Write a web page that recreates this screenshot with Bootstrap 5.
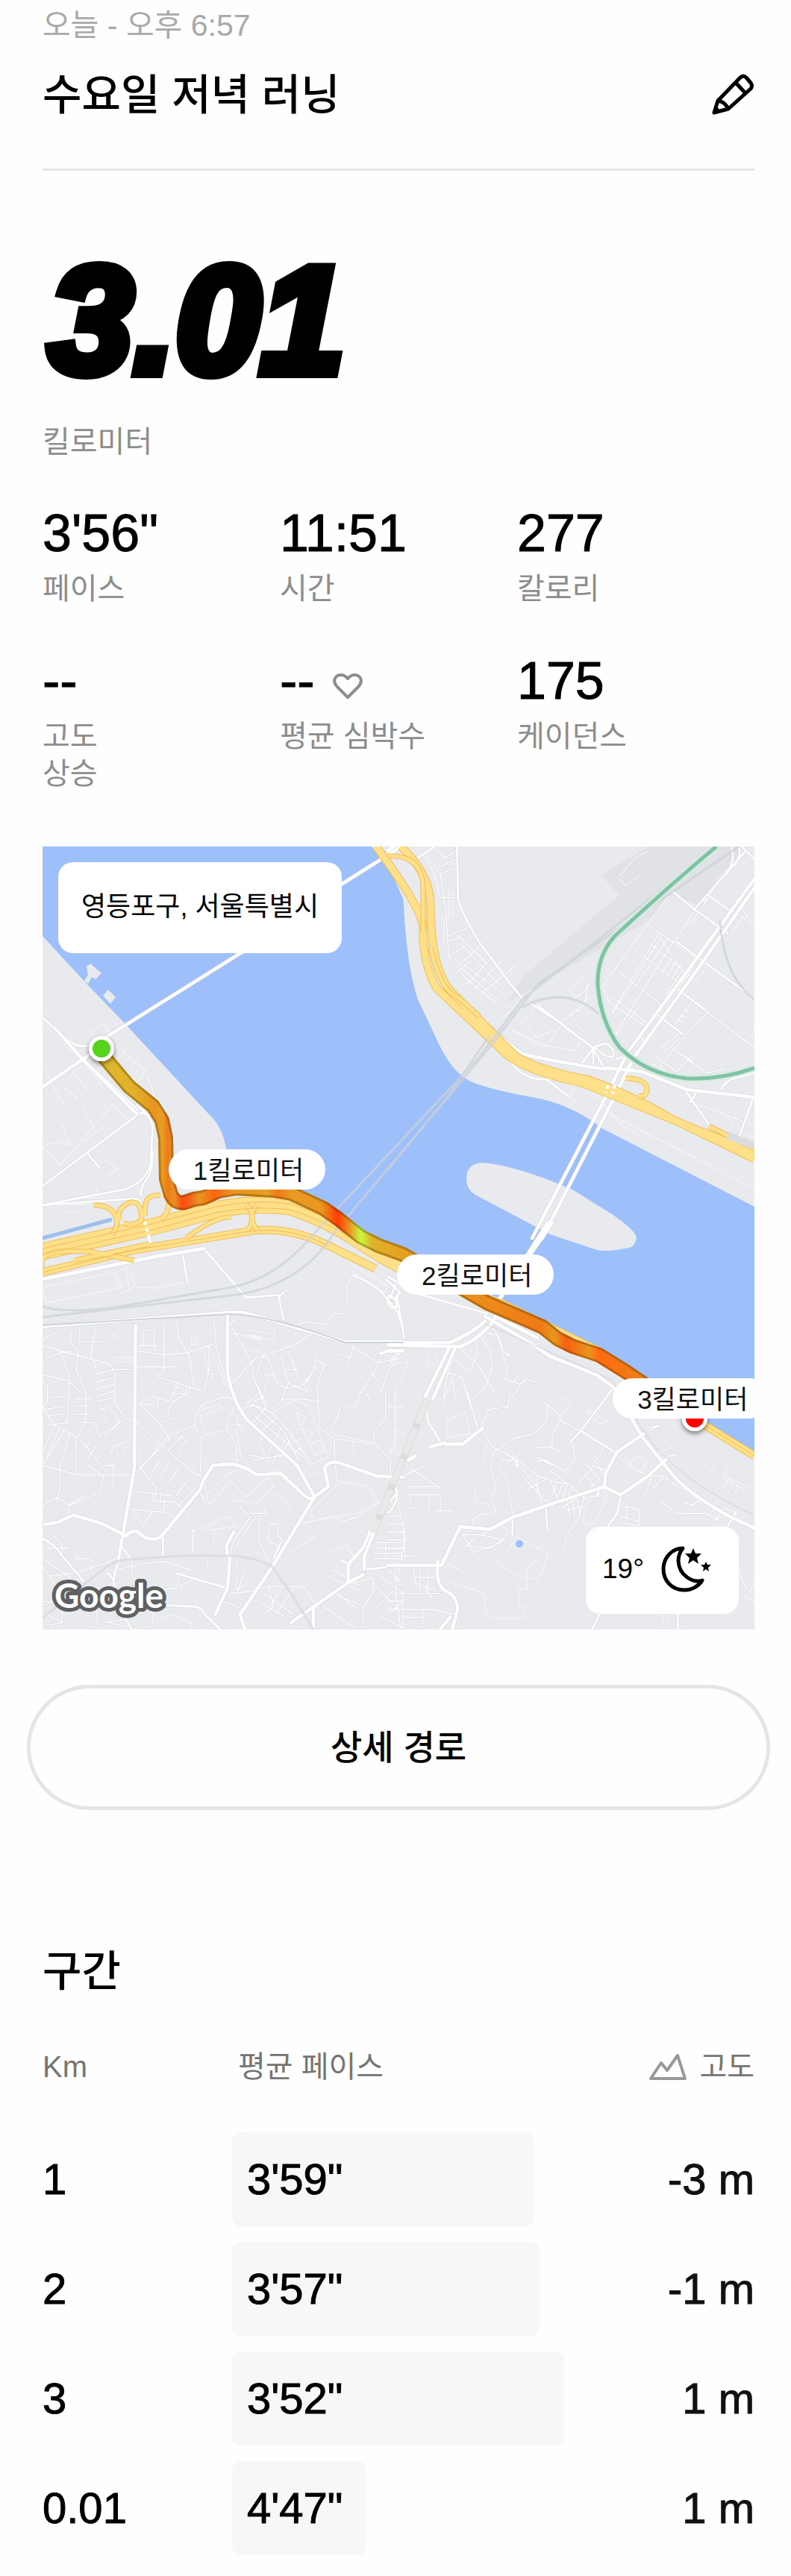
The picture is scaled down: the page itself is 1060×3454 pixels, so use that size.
<!DOCTYPE html>
<html lang="ko">
<head>
<meta charset="utf-8">
<meta name="viewport" content="width=device-width, initial-scale=1">
<title>수요일 저녁 러닝</title>
<link href="https://cdn.jsdelivr.net/npm/bootstrap@5.3.0/dist/css/bootstrap.min.css" rel="stylesheet">
<script src="https://cdn.jsdelivr.net/npm/bootstrap@5.3.0/dist/js/bootstrap.bundle.min.js"></script>
<style>
  body { font-family: "Liberation Sans", "Noto Sans CJK KR", sans-serif; color: #000; background: #fefefe; font-size: 40px; line-height: 50px; }
  .run-page { padding: 9px 49px 6px 57px; }
  .run-date { color: #a9a9a9; font-size: 41px; }
  .run-head { margin-top: 28px; padding-bottom: 59px; border-bottom: 3px solid #e5e5e5; }
  .run-title { font-size: 57px; line-height: 80px; font-weight: 500; }
  .edit-btn svg { width: 58px; height: 56px; }
  .hero-num { margin-top: 100px; padding-left: 8px; font: italic 700 204px/200px "Liberation Sans", sans-serif; -webkit-text-stroke: 14px #000; }
  .caption-text { color: #8d8d8d; }
  .hero-label { margin-top: 38px; }
  .stats { margin-top: 63px; row-gap: 64px; }
  .stat-num { font-size: 70px; line-height: 70px; margin-bottom: 14px; -webkit-text-stroke: 1px #000; }
  .stat-num svg { width: 40px; height: 38px; margin-top: 14px; }
  .map-box { margin-top: 73px; aspect-ratio: 954 / 1050; overflow: hidden; background: #e8eaed; }
  .map-box > svg { width: 100%; height: 100%; display: block; }
  .map-box .place-box { left: 2.2%; top: 2%; padding: 35px 31px 37px; border-radius: 20px; font-size: 36px; }
  .km-pill { position: absolute; background: #fff; border-radius: 27px; width: 210px; height: 54px; padding-left: 33px; font-size: 35px; line-height: 58px; color: #111; white-space: nowrap; }
  .km-1 { left: 17.7%; top: 38.7%; }
  .km-2 { left: 49.8%; top: 52.1%; }
  .km-3 { left: 80.1%; top: 67.9%; }
  .weather-box { right: 21px; bottom: 21px; width: 205px; height: 117px; border-radius: 20px; padding: 0 36px 4px 22px; font-size: 37px; }
  .weather-box svg { width: 68px; height: 62px; }
  .route-btn { margin: 74px -21px 0; height: 168px; border: 5px solid #e5e5e5; font-size: 46px; font-weight: 500; color: #000; }
  .splits-title { margin-top: 176px; font-size: 57px; line-height: 80px; font-weight: 500; }
  .splits { margin-top: 63px; table-layout: fixed; width: 100%; }
  .splits th { font-weight: 400; }
  .splits thead th { color: #757575; padding: 0 0 63px; }
  .splits thead th:nth-child(2) { padding-left: 8px; }
  .splits thead svg { width: 52px; height: 38px; }
  .splits tbody { font-size: 58px; -webkit-text-stroke: 1px; }
  .splits tbody th, .splits tbody td { padding: 0 0 21px; vertical-align: middle; }
  .splits tbody td:last-child { color: #111; }
  .c-km { width: 254px; } .c-alt { width: 200px; }
  .pace-bar { height: 126px; background: #f7f7f7; border-radius: 12px; padding-left: 20px; white-space: nowrap; }
</style>
</head>
<body>
<main class="run-page">
  <div class="run-date">오늘 - 오후 6:57</div>
  <header class="run-head d-flex justify-content-between align-items-center">
    <h1 class="run-title m-0">수요일 저녁 러닝</h1>
    <button class="edit-btn btn p-0 border-0 d-flex" aria-label="제목 수정">
      <svg viewBox="0 0 58 56" fill="none" stroke="#000" stroke-width="5" stroke-linejoin="round"><path d="M4 52 L9 36 L39 5 Q43 1 47 5 L53 12 Q56 16 53 20 L23 47 Z M9 36 Q18 37 23 47 M33 12 L46 26"/><path d="M3 53l3-9 6 6z" fill="#000" stroke-width="2"/></svg>
    </button>
  </header>

  <div class="hero-num">3.01</div>
  <div class="hero-label caption-text">킬로미터</div>

  <section class="stats row gx-0">
    <div class="col-4"><div class="stat-num">3'56"</div><div class="caption-text">페이스</div></div>
    <div class="col-4"><div class="stat-num">11:51</div><div class="caption-text">시간</div></div>
    <div class="col-4"><div class="stat-num">277</div><div class="caption-text">칼로리</div></div>
    <div class="col-4"><div class="stat-num">--</div><div class="caption-text">고도<br>상승</div></div>
    <div class="col-4"><div class="stat-num d-flex align-items-center gap-4">--<svg viewBox="0 0 40 36" fill="none" stroke="#8d8d8d" stroke-width="4" stroke-linejoin="round"><path d="M20 33 L6 19 C-2 10 4 3 11 3 Q16 3 20 8 Q24 3 29 3 C36 3 42 10 34 19 Z"/></svg></div><div class="caption-text">평균 심박수</div></div>
    <div class="col-4"><div class="stat-num">175</div><div class="caption-text">케이던스</div></div>
  </section>

  <section class="map-box position-relative" aria-label="러닝 경로 지도">
    <svg viewBox="57 1135 954 1050" preserveAspectRatio="xMidYMid slice" fill="none" stroke-linejoin="round" stroke-linecap="round">
      <defs>
        <linearGradient id="pace" gradientUnits="userSpaceOnUse" x1="135" y1="0" x2="935" y2="0">
          <stop offset="0" stop-color="#dfb632"/><stop offset=".05" stop-color="#dfb42a"/><stop offset=".09" stop-color="#e8951f"/><stop offset=".103" stop-color="#e5a024"/><stop offset=".112" stop-color="#f07a1a"/><stop offset=".124" stop-color="#e89020"/><stop offset=".136" stop-color="#fb4c10"/><stop offset=".15" stop-color="#f5641a"/><stop offset=".165" stop-color="#e8951f"/><stop offset=".19" stop-color="#fb6412"/><stop offset=".22" stop-color="#ea951f"/><stop offset=".28" stop-color="#e69f22"/><stop offset=".295" stop-color="#f07a1a"/><stop offset=".32" stop-color="#e89a20"/><stop offset=".37" stop-color="#ea951f"/><stop offset=".397" stop-color="#ff3b00"/><stop offset=".415" stop-color="#ec8a1f"/><stop offset=".436" stop-color="#c6fb3c"/><stop offset=".455" stop-color="#dfb22a"/><stop offset=".51" stop-color="#e69f22"/><stop offset=".65" stop-color="#ec8a1a"/><stop offset=".735" stop-color="#f07a16"/><stop offset=".76" stop-color="#e8951f"/><stop offset=".78" stop-color="#f86010"/><stop offset=".818" stop-color="#e8951f"/><stop offset=".834" stop-color="#ff6a10"/><stop offset=".9" stop-color="#ee7e18"/><stop offset="1" stop-color="#e8701a"/>
        </linearGradient>
        <filter id="pinShade" x="-50%" y="-50%" width="200%" height="200%"><feDropShadow dx="0" dy="3" stdDeviation="3" flood-opacity=".5"/></filter>
        <!-- street layers, one path per map quarter -->
        <g id="lanes">
          <path transform="translate(40 1120) scale(.3333 .3444)" d="M245 765l50-33 35 50M245 765l15 45M345 820l120 95-30 45-90-80M360 810l-20 30M385 830l-24 35M410 850l-30 40M430 872l-30 42M450 890l-28 40M170 915l65 80M180 915l45-20 65 75M51 1210l70 75 215-240M51 1210l60-15 60 10M115 960l75 65M60 920l80 135M130 1125l30 80M215 1065l50 90M220 1190l90-65M140 1470l70-8M260 1350l20 60M330 1045l70 70M300 1260l55 40-50 30"/>
          <path transform="translate(520 1120) scale(.3333 .3444)" d="M140 75q60 70 65 165M245 220v100M260 220v100M215 320h10v110M500 760l100 55 150 25M530 740l60-60M560 750l40 40 60-30M730 600l60-60M720 600l40 30M930 160l60-70 60-30M930 170l25 25 60-40M1100 830l70-60M1095 820l30 15 50-50M720 970l90 10 60 70 70 80 60 30M880 1080L1473 1375M1320 1060l60 50M1430 1160l43 20M1420 280l53 80M1200 350l40-20M750 980l-25 40 45 20"/>
          <path transform="translate(40 1640) scale(.3333 .3571)" d="M51 240l290-55 35 55-310 60-15-60M345 200l10 40M385 160l15 90M400 165l25 70-60 30M430 240l70 5 120-22M1290 155l150 80-10 25-140-80M340 505h80v15h-80zM320 415l60 20M650 430h20v25h-20zM980 710l80-45 60 20 80 190-60 30-110-130zM1070 710l40 20-20 30zM1090 770l50 20-20 30zM1125 830l40-15 20 40-40 15zM680 705l80-25 10 20-60 20M680 705l25 90 105-20M690 1040l110-100 80-30M720 1060l90-90 60 60 90-80 20 40-70 60-100-10M700 1140l100-40 30 40-130 15zM1130 1080l120-110 110 20 40 60-90 40-170 30zM1210 1230l60-20 30 40M1050 1230l110-60M1470 630v220M1440 690h60M510 1490l60-20 80 30v25M1240 810l140 20M1300 820v40M740 1160v40M950 1010l60 20 50 60"/>
          <path transform="translate(520 1640) scale(.3333 .3571)" d="M240 740l70-30 20 80-90 15zM160 500h35v30h-35zM780 1125l30-110 40-30 30 30-20 60-40 60zM800 700l80 45-30 10-50-50M700 650l35 25-50 60M950 880l60 60 30-40-40-30-40 50M1290 940l40-50M1370 900l-20 50 100 40M1350 960l100 50M1370 960l-20 40M1390 970l-20 40M1410 975l-15 40M480 1230l40-50 125 60-40 100-90-15-90-60M240 1280l60 30M245 1345l140 45 10 80 40 15h110v-50h-20v-60h35v-70M30 620v200l-20 50M0 770l70 20M0 850l60 20M600 1260l-60 60M10 530l70-10-30 90M400 830l-20 60"/>
        </g>
        <g id="minor">
          <path transform="translate(40 1120) scale(.3333 .3444)" d="M51 730l160 150M230 1240l50 60M51 1440l120-25 130-5M160 1440l90-5M470 930l35 95"/>
          <path transform="translate(520 1120) scale(.3333 .3444)" d="M155 75l55 75 22 140 12 180 70 90 120 90M190 50l40 40M225 90l45-28M200 125l70-30M210 150l60-22M205 242h75M232 292l58-8M240 390l85-32M245 470l65-40M245 410l40-10M280 390l120 110M300 430l165 170M265 540l70-50M290 500l80-70M320 580l100-110M345 600l110-110M370 620l140-110M300 500l180 130M260 470l50 60 130 110M480 560l20-30M465 710l70-70M690 730l100-70 15-80M735 700l55 70M640 820l55-80M500 760l140 60 110 20 25-35M745 640l40-30 30-40M770 655l60-30M760 680l15 10M1130 235L860 590l30 60 140 90M1055 355l190 130M985 440l180 130M925 530l175 130M900 630l140 100M915 780l120-140M905 690l190-290M950 720l200-310M1095 400l120 170M1065 430l120 95-70 100M1090 380L900 690M1125 400l-130 190M1150 410L910 780M1165 600l65-90M1100 540l40-60M1120 550l40-60M1140 560l40-60M1235 290L1150 420M1330 180l-110 160M1380 380l50-65M1400 300l73 55M1290 240l-65 50M1205 545l35 20 40-50M1150 740l75-95M1165 720l20 10M1180 700l20 10M1195 680l20 10M1145 830l135 95 75-15M1085 910l110-130 100-100M1060 850l100 70 60-60M1065 890l60 30M1165 845l60 35M1450 790l23-30M1250 1050l223 80M1205 1040l30-35M1270 680l203 145M1380 1120l20-40"/>
          <path transform="translate(40 1640) scale(.3333 .3571)" d="M51 440l50-30M51 460l270 70 20 30v110l40 60 60 20M165 400l0 50 30 30-10 70 40 80v110l-30 60M200 395v50h95M265 395l-20 100 20 50M51 520l60-30 60-10M120 480l40 90-10 180-80 10M51 570l100 20 60 50M51 600l20 10v60l-20 20 50 70 90 45M70 655l80-5M60 700l85-15M75 725l70-10M180 660h70M180 685h70M180 718h70M190 748h70l20 55 40-30M260 570l75-20M260 600l75-20M265 625l75-20M270 650l70-20M275 670l70-20M280 700l40-8 40 50-60 60M290 720l30 40M330 780l40-40M100 760l-45 90M120 765l-50 110M140 775l-85 130M160 790l-40 130v80l-15 50M185 810l2 130M200 810l110 125M220 850l20-30M235 880l35-45M51 910l140 35h225M305 910h35M335 905v90M51 1060l60-30 50 30 120-50 15-60-60-40M160 1095v-40l70-35M325 870l10-30 50-20 35 15M350 850v20M380 835v25M335 550h85M430 540h160M430 480l120 15 90-10 100-30M455 400v60M465 400h35v80M435 460h80M540 375v180l-30 20 180 55M590 375l10 60 40 60 20 120M640 490l10 60M740 360l10 110 45 140 20 0M720 460v90l-20 80M700 480l20 90M715 550l20 0-5 40M755 530l30 80M600 600l-40 70-70-20-50 30 80 70 40 60-50 40-70 80M440 680l60 0M510 700l10-40M560 720l-5-20 20-30 60-30 10-20M530 750l50-20M570 640l60 0v-30M580 610l20 10M430 750l60 50 60 50 110 90 30 10M500 850l60-50 100-40 30 50-5 140M560 850l50-50 20 20-30 30 10 15M440 920l80-70M490 940l40-60M520 960l40-60M550 980l50-60M590 1020l50-60M600 1060l70-70M440 915l70 80-10 50 80 0 60 50M415 1005l160 20M495 1010v40M525 1010v40M400 1075l140 10 60 30M420 1080l30 50M490 1085l-40 60M540 1040v40M665 760q-10-80 80-95 50-25 85 10l-30 60-10 40 40 50v90M830 730l20 60M800 760l50-5 10 30M830 770l20 115M815 600l90-90 150-50 90-50M800 370l90 150 10 60 50 120M800 410l130 30M830 360l-30 20M880 400l85 15M870 420l60 15M985 390l-5 50-90-20M1070 410l-10 20M870 480h50l40 30 30 90 40 20 65-10 50-60v-40l40 20-30 80 10 160 60 40v60l10 100M940 500l-30 70M1040 480l40 100M960 570l-20 80-40 20M910 600l45 90M920 640l-50 40M980 570h-40M1010 500l30 100-30 70M1040 600l70 30M1030 550l50 0M1100 600l20 40M1150 540l-40 60M1010 660l90 0 60 10M970 700l40-30M890 680l80 30 80 80 80 120M850 700l50-20 120 100 60 110M900 720l200 160M890 760l60-70M920 790l70-60M920 830l20-50M960 860l50-90M970 910l60-100M1000 890l60-100M1030 830l60-20M1060 860l40-20M1130 910l80-40M1130 950l30-20M900 890l120-20M920 930h100M930 840l30 60M880 870l50 10M1240 490l45 15M1280 530l20-70M1300 465l100 60 100-20M1380 560l-50 80M1410 510l-30 60 20 20M1500 470l-60 90-30 80M1330 630l-20 60-60 0-40 100M1430 620v110l-50 60 10 40 60 60v80M1210 790l170 35M1350 630l20 40M1270 320l10-50-10-30 30-50M1060 380l60-8 70 8 30-40h40M900 330l30-35M1010 260l40-10M880 1100l-40-40M890 1090h60l-10-20M890 1100l-70 90-30 100M920 1100v90l50 100M910 1100l-80 110M960 1130h35l0 40 35 40M965 1200l40 10M960 1130v70M655 1150v90M655 1160l10-10M1090 1130l130-30 40 20 60-20 60-40 70-20M1290 1100l30 10M410 1260v60M355 1300l90-20 100-10 110 35M51 1330l150-20 150-50M51 1260l110 70M51 1290l60 80M70 1220h90M90 1170l40 40v50M190 1230l-5 30h60M70 1470l60 30M51 1420l200 20M240 1280l20 50M715 1255v30M835 1250l-5 45M660 1340l-60 20M600 1320l-10 50-50 5M800 1390q80 0 150-25h150l70 90M865 1300l-30 90M830 1320l0 60 60-40M780 1420l80 30M920 1420l110 60M940 1390l120 80M960 1360l20 80-50 40M1010 1370l-40 70M1060 1370l-70 100M1180 1320l150 60M1215 1300l110 60M1220 1380l100 70M1240 1400l80 30M1270 1360l110-30v60l-40 50v80M1180 1440l130 80M1400 1320l100 70M1440 1300l60 60M1380 1350l100 100M1380 1460l120 60M1390 1200h110M1390 1220h110M1385 1240h115M1380 1260h120M1430 1200v60M1400 1440l60-60M1440 1470l60-50M270 1450v60M300 1500l80-10M500 1460l-10 60M130 1440v60l-50 10M320 1500l110 25M700 960l20 100M680 1000l30 60"/>
          <path transform="translate(520 1640) scale(.3333 .3571)" d="M420 395q40 40 40 100 30 50 10 90l60 20 30-20 40 15M370 420l40 60 10 60-30 80-50 40M380 410l60 10 20 60 30 20M350 430l10 60-30 70-60-45M290 470l70 60 80 120M270 500l-30 60-20 120M240 560l60 20 30 90 30 100M265 570l-40 90M300 600l60 160M260 590l10 70M470 500l20-10M500 600l30-30M495 660l50-70M480 700l10-60M375 760l30-60 80-10M380 780l40 60 80 40 100 110 20 70M440 850q-30 10-25 80l20 60-20 40 20 60M440 850l60-40 90-20 50-50 0-60M640 680l60 50-40 60 0 50-80 5M650 840l50 20M690 740l80 40M640 680l-10 0M740 810l10 80-40 40-80-40-40 5M600 880l60 30M740 810l30-30M455 890l70 0 80 60 60 20 60 10M455 890q-20 30 20 60l15 80 15 80M500 870l20 50M480 900l60-40M520 870l0 50M550 960l60 60 40 40M560 1000l80-40M600 950v60M650 930l90 60 60 50M655 970l30 70M680 970l-20 50M700 980l-20 50M720 985l-20 50M740 990l-20 50M760 980l80-80 40 70M790 900l60 60-40 40M820 910l60 20M790 940l40 50M830 900l40-60 50 30 60 50 70 30M700 1070l60-40 10 60M720 1040l10 60M740 1035l10 70M710 1080l65-15M790 1020l-20 80-50 70-20 80M810 1030l40-10v-30M930 1060l80 15v60l-80-10M930 1100l80 20M960 1065v60M1050 950q60-10 100 30l60 30 60 50M1060 950l-30 80M1060 1000l50-45M1090 1040l70 50 120 0 60 30M1120 1090l15-15M1190 1050l40 10M1220 1060l50-30M1290 1100l40-60M1310 1120l40-50 60 20M1320 1100l30 10M1080 870l80-40M1090 880l70-10M1050 780l40-20M1040 770l50-10M40 960l110-50M40 975l60-50 110 70M75 990h130M80 1020l130 0v60M165 1025v70M90 1030v40h30M190 1080h70M0 1100h50M0 1130h60M0 1160h65M0 1190h65M0 1220h70M0 1250h110M30 1000l40 180-40 200 20 140M60 1120l10 150M30 1270v80M300 1170h70l100 20-60 30-110-10M310 1220l40-40M330 1240l100-30 60-50M380 1170l60-40 60 30M350 1000l0 40 60 20M340 1130q0-40 80-40M0 1420h60M30 1390h180M0 1450h180M60 1480h80M100 1290l10 60 80 30M160 1310v70M110 1330h80M130 1300v80M140 1450v70M60 1380v140M180 1450l80 20M150 1370l30 40M300 1170l40 60M1410 1310l30 60M1450 1390l23-40M1430 1400l43 20M1105 1470v30M1125 1470v30M10 510l60-40M0 540l50-70"/>
        </g>
        <g id="mid">
          <path transform="translate(40 1120) scale(.3333 .3444)" d="M51 710q50 45 100 85 30 30 80 25M51 1365L445 1080M230 1235l50 60M445 1080l50 10M51 1440l320-60q90-20 115-100l8-150q-10-40-65-80M51 1440l360-25q30-5 40 30M445 1400q0-35 30-70 20-30 18-100M215 870l220 200"/>
          <path transform="translate(520 1120) scale(.3333 .3444)" d="M277 43l5 210q30 80 90 170l120 155 50 60M110 95l90-60M565 650l120 75M600 660l220 165M690 730l130 95M825 825l50-15q40 20 30 50-30 10-75-35M825 830l-45 55M825 830v60M825 830l40 70M1145 220l90 70 130 90M1290 235l80 55M1165 600l110 80M1085 700l100 75M1160 415l85 60 228 160M1380 43q20 50-20 110M1410 43q20 50-50 100M1440 60L1230 290M1420 43l53 50M635 950l90 65M500 890q50 60 130 60h120M1200 1000l90 125 115 60M1215 1040l30-50M1473 1010l-65 175M1340 990q20-40 60-45l73-20M920 870l60-20M1020 790l10 20M960 900l40 15"/>
          <path transform="translate(40 1640) scale(.3333 .3571)" d="M480 80l130-8 290-50M615 120l18 100M1000 275l20 85M700 95l170 185 130-10M1020 260l-20 20M1300 195q80 30 120 70l60 70 20 60M1430 210l60 50-20 20M1460 280q-30-10-20 20t40 10M420 380q10 20 0 50M51 1185q50 20 75 60l90 100M365 1210l40 50M310 1315q30 10 35 70M360 1270q-40 60-10 160l60 95M590 1315l200 55M1355 1300l145-15M1250 1265l40 20M1010 1200l-30 60M1470 1020l-80 90M545 1435l120 5q20 0 40 30l60 55M535 1180v70"/>
          <path transform="translate(520 1640) scale(.3333 .3571)" d="M905 620L775 780l-40 40M775 780l145 85M0 200l100 60 300 80M30 230l-20 50M35 270l30 160M0 270q50 20 30 50M155 700q0 50 30 80l30 50M500 1110v60M635 1070l5 80M935 1020q-10 80-30 90l-30 40M1400 1080l-40 70M1165 1470v55M850 1470l-30 55M850 1000l-10 25M0 1090q60-60 20-120"/>
        </g>
        <g id="major">
          <path transform="translate(40 1120) scale(.3333 .3444)" d="M1500 40L1257 188 845 460 300 790M51 980L215 870l75-50M100 750l110 120 220 215"/>
          <path transform="translate(520 1120) scale(.3333 .3444)" d="M0 60l30-20M1473 170L1240 480 960 850l-70 140-310 578M1473 205L1260 500 985 870l-70 140-295 558M370 710q80 80 170 140 60 20 330 60M870 905l150 15 180 70 273 30"/>
          <path transform="translate(40 1640) scale(.3333 .3571)" d="M51 210l460-85 190-30M470 35l15 40M51 388l740-52q60-5 110 10l370 100h229M425 385L420 920 372 1180l-15 80M795 350v210q20 110 80 180l200 170 65 110q0 30-40 0l-90-80-100 5q-50-40-120-40l-55 5-40 60-10 30-160 180q-50 20-90-20-25-10-50 15-90-50-140-60l-70-18-60 25-55 10M1140 1030l60-40-15-70q15-30 60-20l150 50 105 5M1140 1035L975 1290l-130 180 20 55M805 1250l-10 120-50 100M795 1250l-5-40 30-50M1280 1350v-70l60-60 50-110M1050 1500l230-150 60-30M1345 1300v-50l60-140M1140 1440v80M1500 480h-60l-30 10"/>
          <path transform="translate(520 1640) scale(.3333 .3571)" d="M660 0L450 280M640 0L440 300M0 458l290 6q60-20 120-80l30-40M0 448l250 0q80-30 140-80M245 470L150 650M270 470L180 660M390 350l200 110 60 40 190 70 70 50 110 180 120 140q60 70 230 160l103 45M430 350l170 80M920 860l-45 80-5 50 65 30 110-70 75-65M870 990l-200 60-170 55-90 45-120-10-75 145H0M300 830l80-60M230 830l70 0M170 840l60-15M80 890l30-15M1030 790l-110 70M200 1270q-10 90 30 110 50 20 50 70l-20 70M250 1480l-40 45"/>
        </g>
        <!-- motorway ribbons, ramps and the run itself -->
        <path id="leftBank" d="M57 1678L200 1646 290 1622Q340 1612 390 1618 440 1635 480 1662T560 1707"/>
        <path id="ribbons" d="M57 1706L180 1676 340 1650Q390 1645 440 1670L503 1701M540 1700L677 1750 803 1812 935 1905 1011 1952M537 1135Q575 1170 577 1210 577 1300 605 1330L690 1415Q720 1435 790 1448 850 1470 900 1500L1011 1554M504 1135Q560 1210 567 1240 565 1290 585 1325L680 1415Q710 1438 780 1452L1011 1546"/>
        <path id="ramps" d="M520 1148Q565 1145 567 1190V1250M577 1270Q590 1330 615 1338L643 1363M838 1446Q868 1446 867 1462 865 1472 855 1470M950 1510L1011 1540M125 1616Q155 1615 157 1640 155 1650 150 1655M160 1636Q155 1620 175 1612 190 1610 190 1635 180 1645 165 1640M195 1630Q190 1600 215 1603M215 1635Q230 1625 225 1600M57 1700Q50 1682 80 1678L120 1678 180 1690M330 1615Q345 1630 332 1650M345 1615Q330 1630 345 1650M250 1660Q290 1630 310 1632M100 1690L200 1668"/>
        <path id="run" d="M135 1412L173 1457 205 1483 217 1502 222 1526 223 1581 229 1602Q236 1615 248 1612L260 1608 273 1606 293 1597 317 1593 367 1596 390 1600 433 1620 453 1634 483 1658 507 1670 540 1682 653 1747 727 1779 747 1795 767 1805 803 1817 840 1840 931 1902"/>
      </defs>

      <rect x="57" y="1135" width="954" height="1050" fill="#e8eaed"/>
      <path fill="#e0e2e6" d="M805 1173L870 1135H1000L960 1180 940 1215 900 1200 868 1235 800 1275 680 1345 700 1310 830 1200Z"/>
      <path fill="#9dc0fb" d="M57 1135H498L540 1189Q543 1290 560 1340L583 1389Q605 1440 633 1451T713 1471 807 1513L1011 1618V1948L940 1915 870 1850 803 1808 737 1774 677 1744 600 1712 540 1680 480 1648 433 1612 330 1595 303 1540Q298 1510 280 1494L168 1373 117 1320 57 1255Z"/>
      <path fill="#e8eaed" d="M625 1580Q625 1560 647 1559 690 1562 767 1595L820 1628Q852 1650 853 1660 850 1673 843 1673 810 1680 797 1675L737 1655 637 1602Q625 1595 625 1580ZM520 1158l15-8 20 30 10 30-23 0ZM116 1296l5-4 15 13-8 8-5-3-5 9-5-4 5-8zM138 1335l7-8 10 10-7 9z"/>
      <path stroke="#9dbfec" stroke-width="5" stroke-linecap="butt" d="M57 1660L150 1635"/>
      <ellipse cx="696" cy="2070" rx="5" ry="5" fill="#9dc0fb"/>

      <use href="#lanes" stroke="#f6f7f8" stroke-width="3"/>
      <use href="#minor" stroke="#d9dbdf" stroke-width="7"/>
      <use href="#minor" stroke="#fff" stroke-width="4"/>
      <use href="#mid" stroke="#d4d6da" stroke-width="11"/>
      <use href="#mid" stroke="#fff" stroke-width="8"/>
      <use href="#major" stroke="#d0d3d8" stroke-width="16"/>
      <use href="#major" stroke="#fff" stroke-width="13"/>
      <g stroke="#cfd2d6" stroke-width="2">
        <path d="M57 1777L305 1762Q350 1760 463 1800H540"/>
        <path d="M650 1775L735 1812 820 1850 860 1915Q900 1980 1011 2032" stroke-width="1"/>
        <path d="M57 2169L120 2119Q145 2096 163 2092L240 2086H313Q350 2090 365 2101L390 2136 420 2185" stroke="#dcdee1" stroke-width="3"/>
      </g>
      <g stroke-linecap="butt"><path stroke="#dcdcdc" stroke-width="10" d="M573 1875L500 2055"/><path stroke="#e9e9e9" stroke-width="8" stroke-dasharray="36 8" d="M573 1875L500 2055"/></g>

      <!-- riverside expressways -->
      <g stroke-linecap="butt">
        <use href="#leftBank" stroke="#efbd55" stroke-width="23"/>
        <use href="#leftBank" stroke="#ffe08a" stroke-width="21"/>
        <use href="#ribbons" stroke="#efbd55" stroke-width="11"/>
        <use href="#ribbons" stroke="#ffe08a" stroke-width="9"/>
        <use href="#ramps" stroke="#efbd55" stroke-width="7"/>
        <use href="#ramps" stroke="#ffe08a" stroke-width="5"/>
        <path stroke="#efbd55" stroke-width="1" d="M57 1674L200 1642 290 1618Q340 1608 390 1614 440 1631 480 1658M57 1682L200 1650 290 1626Q340 1616 390 1622 440 1639 480 1666M57 1706L180 1676 340 1650Q390 1645 440 1670M935 1905L1011 1952"/>
      </g>

      <!-- rail lines -->
      <g stroke="#cdd1d6" stroke-opacity=".75" stroke-width="3">
        <path d="M57 1752Q90 1762 160 1752L310 1726Q370 1715 420 1655L640 1420 700 1340 960 1135M57 1766L300 1738Q400 1730 450 1650L660 1400 720 1320 990 1135M700 1350Q760 1320 803 1360M965 1235Q970 1310 1011 1340M520 1568L600 1470 655 1390"/>
      </g>
      <path stroke="#fff" stroke-width="4" stroke-dasharray="5 4" stroke-linecap="butt" d="M194 1638L200 1660M815 1455L812 1465M824 1455L821 1467"/>
      <path stroke="#dcdcdc" stroke-width="10" stroke-linecap="butt" d="M975 1522L1011 1537"/>

      <!-- green metro line -->
      <g stroke-linecap="butt"><path stroke="#d8ece3" stroke-width="10" d="M960 1135Q900 1185 825 1254 800 1280 801 1320 805 1370 830 1404 865 1440 920 1446 965 1448 1011 1432"/>
      <path stroke="#80c2a4" stroke-width="5" d="M960 1135Q900 1185 825 1254 800 1280 801 1320 805 1370 830 1404 865 1440 920 1446 965 1448 1011 1432"/></g>

      <!-- the run, coloured by pace -->
      <use href="#run" stroke="url(#pace)" stroke-width="20"/>
      <use href="#run" stroke="#5a3c00" stroke-opacity=".35" stroke-width="20"/>
      <use href="#run" stroke="url(#pace)" stroke-width="14"/>
      <g filter="url(#pinShade)"><circle cx="136" cy="1406" r="17" fill="#fff"/><circle cx="931" cy="1902" r="17" fill="#fff"/></g>
      <circle cx="136" cy="1406" r="12" fill="#55d41b"/><circle cx="931" cy="1902" r="12" fill="#f00"/>
      <text x="73" y="2156" font-family="Lato, sans-serif" font-weight="700" font-size="46" fill="#fff" stroke="#5f6062" stroke-width="10" paint-order="stroke">Google</text>
    </svg>
    <div class="place-box position-absolute bg-white">영등포구, 서울특별시</div>
    <div class="km-pill km-1">1킬로미터</div>
    <div class="km-pill km-2">2킬로미터</div>
    <div class="km-pill km-3">3킬로미터</div>
    <div class="weather-box position-absolute bg-white d-flex align-items-center justify-content-between">19°
      <svg viewBox="0 0 68 62"><path d="M29 3C15 3 3 15 3 31s12 28 28 28c11 0 20-6 24-13C43 50 24 40 23 20c0-7 2-12 6-17z" fill="none" stroke="#000" stroke-width="5" stroke-linejoin="round"/><path d="M43 3l3 7 8 0-6 6 2 8-7-5-7 5 2-8-6-6 8 0zM60 21l2 4 5 0-4 4 1 5-4-3-4 3 1-5-4-4 5 0z"/></svg>
    </div>
  </section>

  <div class="d-grid"><button class="route-btn btn rounded-pill">상세 경로</button></div>

  <h2 class="splits-title mb-0">구간</h2>
  <table class="splits">
    <colgroup><col class="c-km"><col><col class="c-alt"></colgroup>
    <thead>
      <tr><th scope="col">Km</th><th scope="col">평균 페이스</th>
      <th scope="col"><div class="d-flex justify-content-end align-items-center gap-3"><svg viewBox="0 0 52 38" fill="none" stroke="#999" stroke-width="4" stroke-linejoin="round"><path d="M3 35L17 14L25 24L39 4L49 35Z"/></svg>고도</div></th></tr>
    </thead>
    <tbody>
      <tr><th scope="row">1</th><td><div class="pace-bar d-flex align-items-center" style="width:81%">3'59"</div></td><td class="text-end">-3 m</td></tr>
      <tr><th scope="row">2</th><td><div class="pace-bar d-flex align-items-center" style="width:82.4%">3'57"</div></td><td class="text-end">-1 m</td></tr>
      <tr><th scope="row">3</th><td><div class="pace-bar d-flex align-items-center" style="width:89%">3'52"</div></td><td class="text-end">1 m</td></tr>
      <tr><th scope="row">0.01</th><td><div class="pace-bar d-flex align-items-center" style="width:36%">4'47"</div></td><td class="text-end">1 m</td></tr>
    </tbody>
  </table>
</main>
</body>
</html>
